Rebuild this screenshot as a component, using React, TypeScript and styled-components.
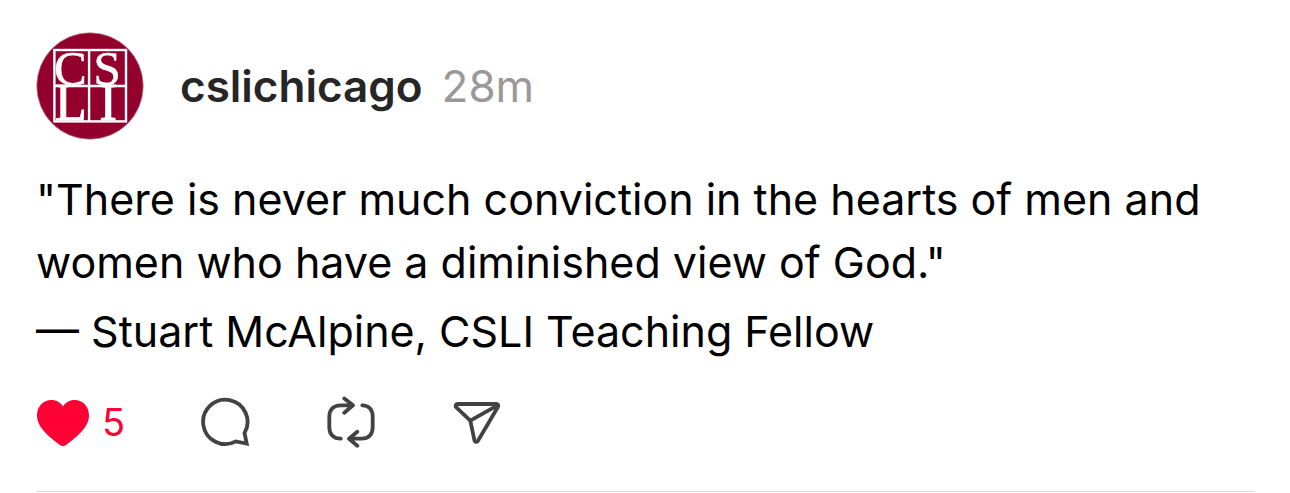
import React from "react";
import styled, { createGlobalStyle } from "styled-components";

const GlobalStyle = createGlobalStyle`
  * { box-sizing: border-box; }
  body {
    margin: 0;
    background: #ffffff;
    color: #000000;
    font-family: Inter, "Liberation Sans", sans-serif;
  }
`;

const Post = styled.article`
  display: flex;
  flex-direction: column;
  margin: 0 36px;
  padding: 32px 0 43px;
  border-bottom: 1px solid #d9d9d9;
`;

const Header = styled.header`
  display: flex;
  align-items: center;
  gap: 36px;
`;

const AvatarLink = styled.a`
  display: block;
  flex: none;
  width: 108px;
  height: 108px;
`;

const Byline = styled.div`
  display: flex;
  align-items: baseline;
  gap: 19px;
  font-size: 44px;
  line-height: 56px;
`;

const Username = styled.a`
  color: #262626;
  font-weight: 600;
  text-decoration: none;
`;

const Timestamp = styled.time`
  color: #999999;
`;

const Body = styled.div`
  display: flex;
  flex-direction: column;
  gap: 6px;
  margin-top: 28px;
  font-size: 43px;
  line-height: 63px;
`;

const Paragraph = styled.p`
  margin: 0;
`;

const Actions = styled.div`
  display: flex;
  align-items: center;
  gap: 76px;
  margin-top: 33px;
`;

const Action = styled.button<{ $liked?: boolean }>`
  display: flex;
  align-items: center;
  gap: 12px;
  width: ${(p) => (p.$liked ? "88px" : "50px")};
  height: 52px;
  padding: 0;
  border: 0;
  background: none;
  color: ${(p) => (p.$liked ? "#ff0034" : "#424242")};
  font-family: inherit;
  font-size: 38px;
  line-height: 52px;
  cursor: pointer;
`;

const Icon = styled.svg<{ $sharp?: boolean }>`
  display: block;
  flex: none;
  fill: none;
  stroke: currentColor;
  stroke-width: 3.8;
  stroke-linecap: round;
  stroke-linejoin: ${(p) => (p.$sharp ? "miter" : "round")};
`;

const HeartShape = styled.svg`
  display: block;
  flex: none;
  fill: currentColor;
`;

const Avatar = () => (
  <svg width="108" height="108" viewBox="0 0 108 108" role="img" aria-label="CSLI">
    <circle cx="54" cy="54" r="53.3" fill="#94002e" stroke="#b9a5ab" strokeWidth="0.7" />
    <g fill="none" stroke="#ffffff" strokeWidth="2.4">
      <rect x="18.4" y="18" width="71.6" height="71.4" />
      <path d="M53.1 18v71.4M18.4 54h71.6" />
    </g>
    <g fill="#ffffff" stroke="#ffffff" strokeWidth="0.5" fontFamily='"Liberation Serif", serif'>
      <text x="18" y="52.5" fontSize="49">C</text>
      <text x="57.500" y="52.5" fontSize="49">S</text>
      <text x="19" y="88" fontSize="52" strokeWidth="0.9">L</text>
      <text x="63.500" y="88" fontSize="52" strokeWidth="1.2">I</text>
    </g>
  </svg>
);

const HeartIcon = () => (
  <HeartShape width="54" height="52" viewBox="0 0 54 52" aria-hidden="true">
    <path d="M15.5 4C7 4 1 10.600 1 19.500C1 31.500 13.500 41 23.500 48.700C25.800 50.400 28.200 50.400 30.500 48.700C40.500 41 53 31.500 53 19.500C53 10.600 47 4 38.500 4C33.500 4 29.500 6.600 27 10.500C24.500 6.600 20.500 4 15.500 4Z" />
  </HeartShape>
);

const ReplyIcon = () => (
  <Icon $sharp width="50" height="52" viewBox="-1 -1 50 52" aria-hidden="true">
    <path d="M43.500 36A22.200 22.200 0 1 0 34.800 44.400L45.700 46.600Z" />
  </Icon>
);

const RepostIcon = () => (
  <Icon width="50" height="52" viewBox="-1 0 50 52" aria-hidden="true">
    <path d="M13.700 42.700C6.500 42.700 2.300 38.500 2.300 31.300V20.700C2.300 13.500 6.500 9.300 13.700 9.300H26M17.300 2.400L26 9.300L17.300 16.700" />
    <path d="M35.300 9.300C41.700 9.300 45.700 13.500 45.700 20.700V31.300C45.700 38.500 41.700 42.700 34.500 42.700H22M30.300 35.700L22 42.700L30.300 49.700" />
  </Icon>
);

const ShareIcon = () => (
  <Icon width="50" height="52" viewBox="-1 0 50 52" aria-hidden="true">
    <path d="M4.700 8H43.300C45 8 45.800 9.500 44.900 11L25 44.700C24 46.400 21.700 46 21.400 44.200L17.300 24.700L3.300 11.300C1.900 9.900 2.700 8 4.700 8ZM17.300 24.700L44.500 9.300" />
  </Icon>
);

export default function App() {
  return (
    <>
      <GlobalStyle />
      <Post>
        <Header>
          <AvatarLink href="#profile">
            <Avatar />
          </AvatarLink>
          <Byline>
            <Username href="#profile">cslichicago</Username>
            <Timestamp dateTime="PT28M">28m</Timestamp>
          </Byline>
        </Header>
        <Body>
          <Paragraph>
            "There is never much conviction in the hearts of men and women who have a diminished view
            of God."
          </Paragraph>
          <Paragraph>— Stuart McAlpine, CSLI Teaching Fellow</Paragraph>
        </Body>
        <Actions>
          <Action type="button" $liked aria-label="Unlike, 5 likes" aria-pressed="true">
            <HeartIcon />
            <span>5</span>
          </Action>
          <Action type="button" aria-label="Reply">
            <ReplyIcon />
          </Action>
          <Action type="button" aria-label="Repost">
            <RepostIcon />
          </Action>
          <Action type="button" aria-label="Share">
            <ShareIcon />
          </Action>
        </Actions>
      </Post>
    </>
  );
}
